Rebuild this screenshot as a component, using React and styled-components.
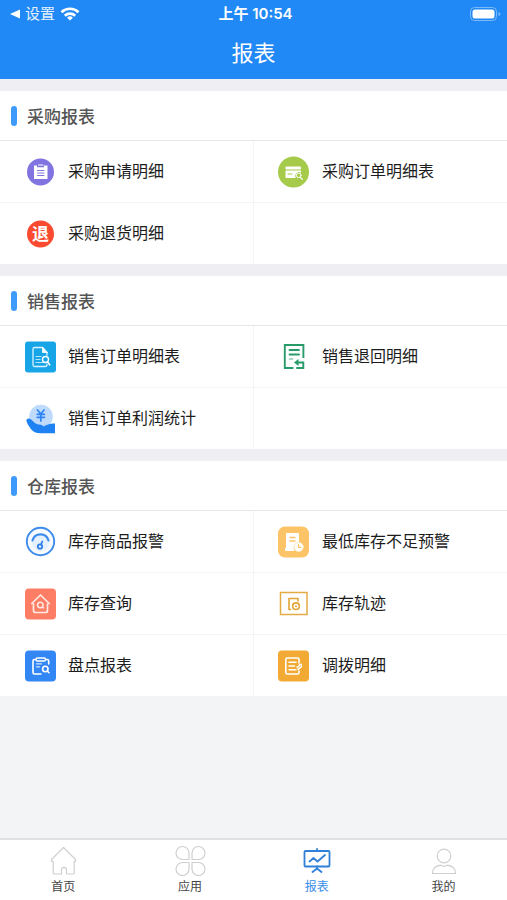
import React from 'react';
import styled, { createGlobalStyle } from 'styled-components';

const GlobalStyle = createGlobalStyle`
  * {
    box-sizing: border-box;
  }
  body {
    margin: 0;
    background-color: #f3f4f6;
    font-family: Inter, 'Noto Sans CJK SC', sans-serif;
  }
`;

const Page = styled.div`
  display: flex;
  flex-direction: column;
  min-height: 100vh;
`;

const Header = styled.header`
  color: #fff;
  background-color: #2189f5;
`;
const StatusBar = styled.div`
  display: grid;
  grid-template-columns: 1fr auto 1fr;
  align-items: center;
  height: 28px;
  padding: 0 6px 0 10px;
  font-size: 15px;
  line-height: 20px;
`;
const StatusBack = styled.a`
  display: flex;
  align-items: center;
  column-gap: 5px;
  color: #e4f1ff;
  text-decoration: none;
`;
const StatusTime = styled.span`
  font-weight: 600;
`;
const Battery = styled.svg`
  justify-self: end;
`;
const PageTitle = styled.h1`
  margin: 0;
  padding: 9px 0 10px;
  font-weight: 400;
  font-size: 22px;
  line-height: 32px;
  text-align: center;
`;

const Main = styled.main`
  flex: 1;
`;
const Section = styled.section`
  border-top: 12px solid #efeff3;
  background-color: #fff;
`;
const SectionTitle = styled.h2`
  display: flex;
  align-items: center;
  column-gap: 10px;
  height: 50px;
  margin: 0;
  padding-left: 11px;
  color: #555;
  font-weight: 500;
  font-size: 17px;
  border-bottom: 1px solid #e6e6e8;
  &::before {
    width: 6px;
    height: 20px;
    border-radius: 3px;
    background-color: #3f9bfb;
    content: '';
  }
`;
const ReportGrid = styled.ul`
  display: grid;
  grid-template-columns: repeat(2, 1fr);
  gap: 1px;
  margin: 0;
  padding: 0;
  background-color: #f4f4f6;
  list-style: none;
`;
const ReportCell = styled.li`
  height: 61px;
  background-color: #fff;
`;
const ReportLink = styled.a`
  display: flex;
  align-items: center;
  column-gap: 12px;
  height: 100%;
  padding-left: 24px;
  color: #1c1c1c;
  font-size: 16px;
  text-decoration: none;
`;
const ReportName = styled.span`
  padding-bottom: 3px;
`;
const ReportIcon = styled.svg.attrs({
  width: 32,
  height: 32,
  viewBox: '0 0 32 32',
  fill: 'none',
  strokeLinecap: 'round',
  strokeLinejoin: 'round',
  'aria-hidden': true,
})`
  flex: none;
`;
const IconText = styled.text`
  font-weight: 700;
  font-size: 17px;
  text-anchor: middle;
`;

const TabBar = styled.nav`
  position: sticky;
  bottom: 0;
  display: grid;
  grid-template-columns: repeat(4, 1fr);
  height: 62px;
  background-color: #fff;
  border-top: 2px solid #dfe0e3;
`;
const Tab = styled.a`
  display: flex;
  flex-direction: column;
  align-items: center;
  row-gap: 2px;
  padding-top: 4px;
  color: ${({ $active }) => ($active ? '#3a8ee6' : '#444')};
  font-size: 12px;
  line-height: 18px;
  text-decoration: none;
`;
const TabIcon = styled.svg.attrs({
  width: 32,
  height: 32,
  viewBox: '0 0 32 32',
  fill: 'none',
  strokeLinecap: 'round',
  strokeLinejoin: 'round',
  'aria-hidden': true,
})`
  stroke: ${({ $active }) => ($active ? '#3080d8' : '#cfcfcf')};
  stroke-width: ${({ $active }) => ($active ? 1.8 : 1.2)};
`;

const icons = {
  apply: (
    <>
      <circle cx="16.5" cy="16" r="13.5" fill="#8174e0" />
      <path d="M10 9.5h3v1.8h7V9.5h3.5V23H10z" fill="#fff" />
      <path d="M14.5 9h4.500" stroke="#fff" strokeWidth="1.2" />
      <path d="M13.500 14.500h6.500M13.500 17h6.500M13.500 19.500h6.500" stroke="#8174e0" />
    </>
  ),
  purchaseOrder: (
    <>
      <circle cx="15.5" cy="16" r="15.5" fill="#a6cb4b" />
      <rect x="7.5" y="10.5" width="15.5" height="3" rx="1" fill="#fff" />
      <path d="M7.5 14.5H23v2.2a4 4 0 0 0-5.500 5.300h-9a1 1 0 0 1-1-1z" fill="#fff" />
      <path d="M10 18h4" stroke="#a6cb4b" />
      <circle cx="20.7" cy="19.3" r="2.3" stroke="#fff" />
      <path d="M22.4 21.3l2 2" stroke="#fff" strokeWidth="1.2" />
    </>
  ),
  refund: (
    <>
      <circle cx="16.5" cy="16" r="13.5" fill="#fa4b31" />
      <IconText x="16.5" y="22" fill="#fff">
        退
      </IconText>
    </>
  ),
  salesOrder: (
    <>
      <rect x="1" y="0.5" width="31" height="31" rx="3" fill="#18a5e8" />
      <path
        d="M23 14v-2.5l-4.5-5h-8A1.5 1.5 0 0 0 9 8v16a1.5 1.5 0 0 0 1.5 1.5H21a2 2 0 0 0 2-2"
        stroke="#d9f3ff"
        strokeWidth="1.3"
      />
      <path d="M18.5 6.5v5H23z" fill="#fff" stroke="#fff" strokeWidth="0.8" />
      <path d="M12 15.5h5M12 18.5h4M12 21.5h7" stroke="#b5e6fb" strokeWidth="1.2" />
      <circle cx="21.5" cy="18.5" r="3" stroke="#fff" strokeWidth="1.4" />
      <path d="M23.5 21l2.200 2.800" stroke="#fff" strokeWidth="1.6" />
    </>
  ),
  salesReturn: (
    <>
      <path
        d="M14.5 27H6.8V4h18.600v12"
        stroke="#289b6b"
        strokeWidth="1.9"
        strokeLinecap="square"
        strokeLinejoin="miter"
      />
      <path d="M11.500 9h9.500M11.500 13.500h9.500" stroke="#289b6b" strokeWidth="1.8" />
      <path d="M11.5 18h3" stroke="#8fcab1" strokeWidth="1.5" />
      <path d="M19 21.500h6.300V27H19" stroke="#289b6b" strokeWidth="1.9" strokeLinejoin="miter" />
      <path d="M16 21.500l4.500-3.500v7z" fill="#289b6b" />
    </>
  ),
  profit: (
    <>
      <circle cx="17" cy="13.5" r="11.8" fill="#bedafc" />
      <path
        d="M13.5 7l3.300 4L20 7M13.2 11.300h7.200M13.2 14.300h7.200M16.800 11.300V18"
        stroke="#2c85f2"
        strokeWidth="1.7"
      />
      <path
        d="M2.8 16.200c1.200-1.300 3.200-.8 4.600.5l3.300 3c1.300 1.100 3 1.700 4.800 1.900 2.200.2 3.600.8 3.600 2l3.600-1.500c2-.9 4.300-1.700 6.300-1.600h2v9.800H16.500c-4.500 0-7.500-1.500-9.800-4.500-1.800-2.500-3.500-5.200-4.200-7.500-.2-.8-.1-1.500.3-2.100z"
        fill="#1f82f2"
      />
    </>
  ),
  gauge: (
    <>
      <circle cx="16.5" cy="15.5" r="13.7" fill="#f7fbff" stroke="#3f8bec" strokeWidth="1.9" />
      <circle cx="16.5" cy="16" r="9" fill="#e5f1ff" />
      <path d="M8.5 14.500a8.300 8.300 0 0 1 16 0" stroke="#3f8bec" strokeWidth="2.2" />
      <circle cx="16" cy="20.500" r="2.200" stroke="#2f7fe8" strokeWidth="1.8" />
      <path d="M17 18.500l1.300-3" stroke="#2f7fe8" strokeWidth="1.8" />
    </>
  ),
  lowStock: (
    <>
      <rect x="0" y="0.5" width="31" height="31" rx="7" fill="#fdc367" />
      <path d="M8 7h13v9.500a5.500 5.500 0 0 0-4.500 8.500H8a1 1 0 0 1-1-1v-2h1z" fill="#fff" />
      <path d="M12 11.500h5M12 15h5" stroke="#fdc367" strokeWidth="1.4" />
      <circle cx="20.700" cy="21" r="4.700" fill="#fff" stroke="#fde3b5" strokeWidth="0.8" />
      <path d="M20.500 18.300v3h2.300" stroke="#fdc367" strokeWidth="1.2" />
    </>
  ),
  stockQuery: (
    <>
      <rect x="1" y="0.5" width="31" height="31" rx="4" fill="#fd7e64" />
      <path
        d="M7.800 15.500l8.700-8.500 8.700 8.500M9.500 16v6.500a2 2 0 0 0 2 2h10a2 2 0 0 0 2-2V16"
        stroke="#ffe9e2"
        strokeWidth="1.7"
      />
      <circle cx="16.300" cy="17" r="2.800" stroke="#ffe9e2" strokeWidth="1.5" />
      <path d="M18.500 19l1 1" stroke="#ffe9e2" strokeWidth="1.5" />
    </>
  ),
  track: (
    <>
      <rect x="2.5" y="4.500" width="26.500" height="22" stroke="#e3ab45" strokeWidth="1.5" strokeLinejoin="miter" />
      <path d="M12.5 21.500h-1.500V10.500h9v2.500" stroke="#e3a535" strokeWidth="1.6" />
      <circle cx="18" cy="18.200" r="3.300" stroke="#e3a535" strokeWidth="1.6" />
      <circle cx="18" cy="18.200" r="1" fill="#e3a535" />
    </>
  ),
  stocktake: (
    <>
      <rect x="1" y="0.5" width="31" height="31" rx="4" fill="#3387f5" />
      <path
        d="M12 9.500h-1.500A1.500 1.500 0 0 0 9 11v11.500a1.500 1.500 0 0 0 1.500 1.500H17M21.500 9.500h1.700a1.500 1.500 0 0 1 1.500 1.500v3"
        stroke="#fff"
        strokeWidth="1.6"
      />
      <rect x="12" y="8" width="9.500" height="3" rx="1.2" stroke="#fff" strokeWidth="1.3" />
      <path d="M12.5 13.800h5M12.5 16.800h3" stroke="#cfe3ff" strokeWidth="1.3" />
      <circle cx="21.300" cy="19" r="2.700" stroke="#fff" strokeWidth="1.6" />
      <path d="M23.300 21l1.700 1.700" stroke="#fff" strokeWidth="1.6" />
    </>
  ),
  transfer: (
    <>
      <rect x="0" y="0.5" width="31" height="31" rx="4" fill="#f2aa35" />
      <path
        d="M21 13V9.500A1.500 1.500 0 0 0 19.500 8H9.300a1.500 1.500 0 0 0-1.500 1.500v13A1.500 1.500 0 0 0 9.300 24h10.200a1.500 1.500 0 0 0 1.500-1.500V21"
        stroke="#fff"
        strokeWidth="1.6"
      />
      <path d="M11 12.300h7M11 16h5.500M11 19.700h7" stroke="#fff" strokeWidth="1.5" />
      <path d="M19 17.300l3-2.300M20 19.300l3.500-2.700" stroke="#fff" strokeWidth="1.5" />
      <path d="M21.300 14.500l2.400-.5-.4 2.300" stroke="#fff" />
    </>
  ),
};

const sections = [
  {
    title: '采购报表',
    reports: [
      { name: '采购申请明细', icon: 'apply' },
      { name: '采购订单明细表', icon: 'purchaseOrder' },
      { name: '采购退货明细', icon: 'refund' },
    ],
  },
  {
    title: '销售报表',
    reports: [
      { name: '销售订单明细表', icon: 'salesOrder' },
      { name: '销售退回明细', icon: 'salesReturn' },
      { name: '销售订单利润统计', icon: 'profit' },
    ],
  },
  {
    title: '仓库报表',
    reports: [
      { name: '库存商品报警', icon: 'gauge' },
      { name: '最低库存不足预警', icon: 'lowStock' },
      { name: '库存查询', icon: 'stockQuery' },
      { name: '库存轨迹', icon: 'track' },
      { name: '盘点报表', icon: 'stocktake' },
      { name: '调拨明细', icon: 'transfer' },
    ],
  },
];

const tabs = [
  {
    name: '首页',
    icon: (
      <path d="M4.5 15.500l12-12 12 12v1.800h-1.300V29a1 1 0 0 1-1 1h-5.700a1 1 0 0 1-1-1v-3.200a2.500 2.500 0 0 0-5 0V30H7.200a1 1 0 0 1-1-1V17.300H4.500z" />
    ),
  },
  {
    name: '应用',
    icon: (
      <>
        <path d="M15 15.500H8.500A6.500 6.500 0 1 1 15 9z" />
        <path d="M18 15.500h6.500A6.500 6.500 0 1 0 18 9z" />
        <path d="M15 18.500H8.500A6.500 6.500 0 1 0 15 25z" />
        <path d="M18 18.500h6.500A6.500 6.500 0 1 1 18 25z" />
      </>
    ),
  },
  {
    name: '报表',
    active: true,
    icon: (
      <>
        <rect x="3.500" y="7" width="25" height="15.500" rx="1" />
        <path d="M16 5v2M16 22.500V25M16 24.500L11.500 28M16 24.500l4.500 3.500" />
        <path d="M8.500 17.500l4-3.500 4 3.500 7.500-6.500" />
      </>
    ),
  },
  {
    name: '我的',
    icon: (
      <>
        <circle cx="16" cy="12" r="6.800" />
        <path d="M4.500 29.500c0-4.500 3.500-7.500 8-8.300 2.200 1.200 4.800 1.200 7 0 4.500.8 8 3.800 8 8.300z" />
      </>
    ),
  },
];

const ReportSection = ({ title, reports }) => (
  <Section>
    <SectionTitle>{title}</SectionTitle>
    <ReportGrid>
      {reports.map(({ name, icon }) => (
        <ReportCell key={name}>
          <ReportLink href="#">
            <ReportIcon>{icons[icon]}</ReportIcon>
            <ReportName>{name}</ReportName>
          </ReportLink>
        </ReportCell>
      ))}
      {reports.length % 2 === 1 && <ReportCell />}
    </ReportGrid>
  </Section>
);

const App = () => (
  <Page>
    <GlobalStyle />
    <Header>
      <StatusBar>
        <StatusBack href="#">
          <svg width="10" height="10" viewBox="0 0 10 10" aria-hidden="true">
            <path d="M0 5l10-4.500v9z" fill="#fff" />
          </svg>
          设置
          <svg
            width="20"
            height="14"
            viewBox="0 0 20 14"
            fill="none"
            stroke="#fff"
            strokeWidth="2.6"
            aria-hidden="true"
          >
            <path d="M1.500 5.200a12.300 12.300 0 0 1 17 0" />
            <path d="M4.800 8.700a7.500 7.500 0 0 1 10.400 0" />
            <path d="M10 13.600l-2.900-2.900a4.200 4.200 0 0 1 5.800 0z" fill="#fff" stroke="none" />
          </svg>
        </StatusBack>
        <StatusTime>上午 10:54</StatusTime>
        <Battery width="31" height="14" viewBox="0 0 31 14" aria-hidden="true">
          <rect x="0.5" y="0.5" width="26" height="13" rx="4" fill="none" stroke="#7dbafa" />
          <rect x="2.5" y="2.5" width="22" height="9" rx="2.5" fill="#fff" />
          <path d="M28.5 5v4c1.200-.3 1.800-1.100 1.800-2s-.6-1.700-1.800-2z" fill="#7dbafa" />
        </Battery>
      </StatusBar>
      <PageTitle>报表</PageTitle>
    </Header>
    <Main>
      {sections.map((section) => (
        <ReportSection key={section.title} {...section} />
      ))}
    </Main>
    <TabBar>
      {tabs.map(({ name, icon, active }) => (
        <Tab key={name} href="#" $active={active} aria-current={active ? 'page' : undefined}>
          <TabIcon $active={active}>{icon}</TabIcon>
          {name}
        </Tab>
      ))}
    </TabBar>
  </Page>
);

export default App;
